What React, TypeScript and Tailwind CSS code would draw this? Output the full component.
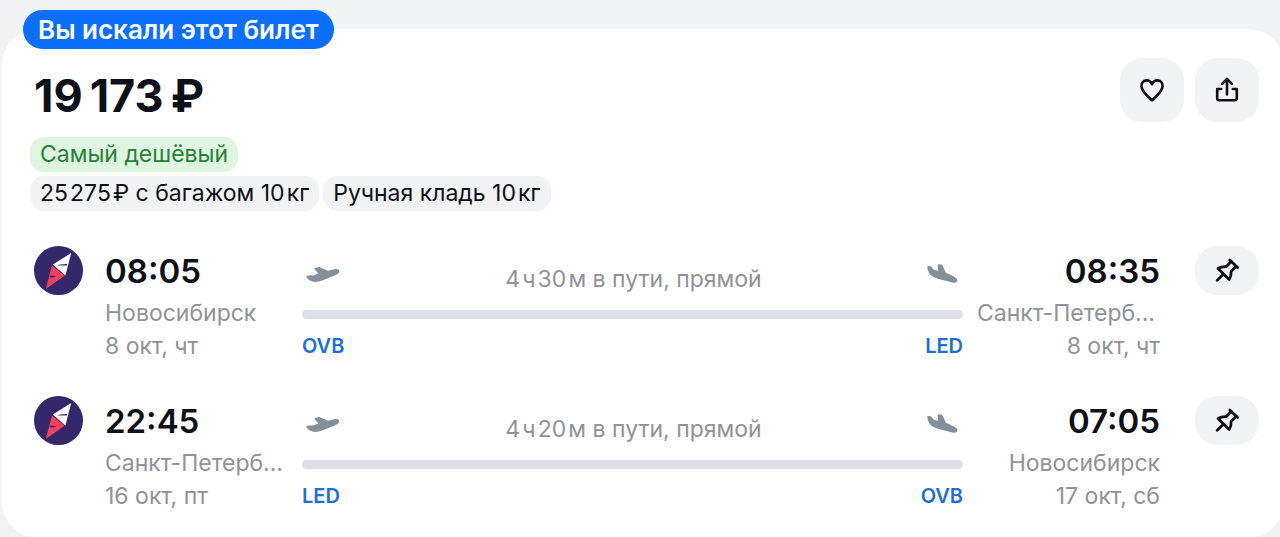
import type { ReactNode } from 'react';

type Stop = {
  time: string;
  city: string;
  date: string;
  code: string;
};

type Flight = {
  id: string;
  duration: string;
  from: Stop;
  to: Stop;
};

const flights: Flight[] = [
  {
    id: 'outbound',
    duration: '4\u200Aч\u200A30\u200Aм в пути, прямой',
    from: { time: '08:05', city: 'Новосибирск', date: '8 окт, чт', code: 'OVB' },
    to: { time: '08:35', city: 'Санкт-Петерб...', date: '8 окт, чт', code: 'LED' },
  },
  {
    id: 'return',
    duration: '4\u200Aч\u200A20\u200Aм в пути, прямой',
    from: { time: '22:45', city: 'Санкт-Петерб...', date: '16 окт, пт', code: 'LED' },
    to: { time: '07:05', city: 'Новосибирск', date: '17 окт, сб', code: 'OVB' },
  },
];

function HeartIcon() {
  return (
    <svg width="26" height="26" viewBox="0 0 26 26" fill="none" stroke="currentColor" strokeWidth="2.6" strokeLinejoin="round">
      <path d="M13 23.4C8.5 19.3 2.4 14.2 2.4 8.9C2.4 5.5 4.7 3.4 7.5 3.4C10 3.4 12 5 13 7.2C14 5 16 3.4 18.5 3.4C21.3 3.4 23.6 5.5 23.6 8.9C23.6 14.2 17.5 19.3 13 23.4Z" />
    </svg>
  );
}

function ShareIcon() {
  return (
    <svg width="26" height="26" viewBox="0 0 26 26" fill="none" stroke="currentColor" strokeWidth="2.6" strokeLinecap="round" strokeLinejoin="round">
      <path d="M13 17.5V2.2M8.2 6.8L13 2L17.8 6.8" />
      <path d="M7.2 12H3.2V21.2Q3.2 23.2 5.2 23.2H20.8Q22.8 23.2 22.8 21.2V12H18.8" />
    </svg>
  );
}

function PinIcon() {
  return (
    <svg width="26" height="26" viewBox="0 0 26 26" fill="none" stroke="currentColor" strokeWidth="2.8" strokeLinecap="round" strokeLinejoin="round">
      <path d="M15.8 2L23.6 9.6" />
      <path d="M17.2 3.6L12.2 8.7C9.3 8.5 6.4 9.2 4 10.5L15.2 21.5C16.7 19.3 17.3 16.3 17.1 13.3L22.2 8.4" />
      <path d="M9.4 16.2L3.2 22.2" />
    </svg>
  );
}

function TakeoffIcon() {
  return (
    <svg width="34" height="18" viewBox="0 0 34 18" fill="currentColor">
      <path d="M.5 11.2C.1 10.4.5 9.9 1.3 9.8L3.6 9.4C4.3 9.3 4.8 9.5 5.4 9.6L7.2 9.5L12.4 7.4L9 3.8C8.2 2.8 8.5 2 9.5 1.7L12.2 1.2C13 1 13.6 1.1 14.3 1.4L22 4.7L28.2 3.2C30.6 2.6 32.8 3.3 33.2 4.8C33.6 6.4 32.2 8 29.9 8.9L17.5 13.9C11.8 16.2 7.7 16.6 4 14.6C2.3 13.6 1.3 12.6.5 11.2Z" />
    </svg>
  );
}

function LandingIcon() {
  return (
    <svg width="32" height="20" viewBox="0 0 32 20" fill="currentColor">
      <path d="M.3 3.2C.2 2.4.7 1.9 1.5 2L3.3 2.2C4 2.3 4.4 2.7 4.7 3.2L6.6 5.4L11.2 7L10.7 1.7C10.6.7 11.1.2 12 .3L14.2.5C15 .6 15.5 1 15.8 1.8L18.6 8.6L27.3 12.8C29.7 13.9 30.8 15.6 30.3 17.1C29.8 18.8 27.7 19.1 25.4 18.5L11.7 15C6.3 13.5 2.9 11.3 1.6 8C.9 6.3.5 5 .3 3.2Z" />
    </svg>
  );
}

function AirlineLogo() {
  return (
    <svg width="49" height="49" viewBox="0 0 49 49" role="img" aria-label="Авиакомпания">
      <circle cx="24.5" cy="24.5" r="24.5" fill="#34276a" />
      <path d="M37.2 7L18.8 18.6L31.4 29.4Z" fill="#fff" />
      <path d="M18 19.6L11.8 43L30.6 29.8Z" fill="#f0425c" />
      <path d="M33.2 17.9L26 18.4L23 19.4L32.8 19.6Z" fill="#34276a" />
      <path d="M16 29.6L22.6 30L19 31.4L15.6 31.2Z" fill="#34276a" />
    </svg>
  );
}

function Tag({ children, green }: { children: ReactNode; green?: boolean }) {
  return (
    <span
      className={
        green
          ? 'rounded-[14px] bg-[#dff5e1] px-[10px] text-[23px] leading-[35px] text-[#2b7f37]'
          : 'rounded-[14px] bg-[#f2f3f5] px-[10px] text-[23px] leading-[35px]'
      }
    >
      {children}
    </span>
  );
}

function StopInfo({ stop, right }: { stop: Stop; right?: boolean }) {
  // shortened names always start at the column's left edge
  const shortened = stop.city.endsWith('...');

  return (
    <div className={right ? 'w-[183px] text-right' : 'w-[183px]'}>
      <div className="text-[33px] leading-[51px] font-semibold">{stop.time}</div>
      <div className={shortened ? 'text-left text-[23px] leading-[33px] text-[#8f9399]' : 'text-[23px] leading-[33px] text-[#8f9399]'}>
        {stop.city}
      </div>
      <div className="text-[23px] leading-[33px] text-[#8f9399]">{stop.date}</div>
    </div>
  );
}

function FlightRow({ flight }: { flight: Flight }) {
  return (
    <div className="flex items-start">
      <div className="mr-[22px] shrink-0">
        <AirlineLogo />
      </div>
      <StopInfo stop={flight.from} />
      <div className="mx-[14px] min-w-0 flex-1">
        <div className="flex h-[50px] items-end justify-between px-1 text-[#858f9b]">
          <div className="pb-3">
            <TakeoffIcon />
          </div>
          <span className="text-[23px] leading-[33px] text-[#8f9399]">{flight.duration}</span>
          <div className="pb-3">
            <LandingIcon />
          </div>
        </div>
        <div className="mt-[14px] h-[9px] rounded-full bg-[#dddfe8]" />
        <div className="mt-[11px] flex justify-between text-xl leading-[33px] font-semibold text-[#1c6fd6]">
          <span>{flight.from.code}</span>
          <span>{flight.to.code}</span>
        </div>
      </div>
      <StopInfo stop={flight.to} right />
      <button
        type="button"
        aria-label="Закрепить рейс"
        className="ml-[35px] flex h-[49px] w-16 shrink-0 items-center justify-center rounded-[22px] bg-[#f2f3f5]"
      >
        <PinIcon />
      </button>
    </div>
  );
}

export default function App() {
  return (
    <main className="min-h-screen overflow-x-hidden bg-[#f2f3f5] pt-[29px] font-['Inter',sans-serif] text-[#0c1018]">
      <article className="relative -mr-1 ml-[2px] rounded-[36px] bg-white pt-[29px] pr-[25px] pb-[25px] pl-8">
        <div className="absolute -top-[19px] left-[21px] rounded-full bg-[#0b6ffb] px-[15px] text-[26px] leading-[39px] font-semibold text-white">
          Вы искали этот билет
        </div>

        <header className="flex items-start justify-between">
          <h2 className="mt-2 text-[45px] leading-[60px] font-bold">19&thinsp;173&thinsp;₽</h2>
          <div className="flex gap-[11px]">
            <button
              type="button"
              aria-label="В избранное"
              className="flex size-16 items-center justify-center rounded-[22px] bg-[#f2f3f5]"
            >
              <HeartIcon />
            </button>
            <button
              type="button"
              aria-label="Поделиться"
              className="flex size-16 items-center justify-center rounded-[22px] bg-[#f2f3f5]"
            >
              <ShareIcon />
            </button>
          </div>
        </header>

        <div className="mt-[11px] -ml-1 flex flex-col items-start gap-1">
          <Tag green>Самый дешёвый</Tag>
          <div className="flex gap-1">
            <Tag>25&#8202;275&#8202;₽ с багажом 10&#8202;кг</Tag>
            <Tag>Ручная кладь 10&#8202;кг</Tag>
          </div>
        </div>

        <div className="mt-[35px] flex flex-col gap-[33px]">
          {flights.map((flight) => (
            <FlightRow key={flight.id} flight={flight} />
          ))}
        </div>
      </article>
    </main>
  );
}
